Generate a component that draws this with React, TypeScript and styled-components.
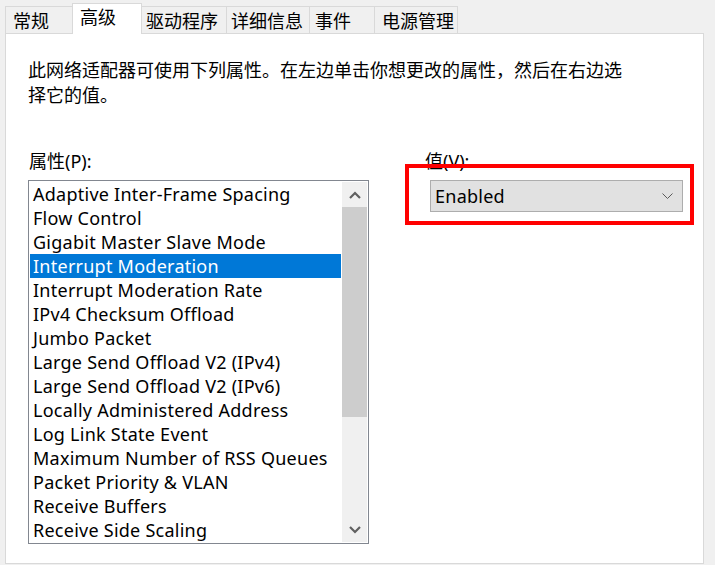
import React from "react";
import styled, { createGlobalStyle } from "styled-components";

const Global = createGlobalStyle`
  html, body { margin: 0; padding: 0; background: #f0f0f0; }
  body { font-family: "Noto Sans", "Noto Sans CJK SC", sans-serif; color: #000; }
`;

const Window = styled.div`
  position: relative;
  width: 715px;
  height: 565px;
  background: #f0f0f0;
  overflow: hidden;
`;

const TabBar = styled.div`
  display: flex;
  align-items: flex-end;
  height: 33px;
  padding-left: 5px;
  position: relative;
  z-index: 1;
`;

const Tab = styled.div<{ $w: number; $pl: number; $active?: boolean }>`
  box-sizing: border-box;
  width: ${(p) => p.$w}px;
  height: ${(p) => (p.$active ? 31 : 27)}px;
  margin-left: -1px;
  margin-bottom: ${(p) => (p.$active ? -1 : 0)}px;
  padding-left: ${(p) => p.$pl}px;
  border: 1px solid #d9d9d9;
  border-bottom: none;
  background: ${(p) => (p.$active ? "#ffffff" : "#f0f0f0")};
  font-family: "Noto Sans CJK SC", sans-serif;
  font-size: 18px;
  line-height: ${(p) => (p.$active ? 25 : 26)}px;
  white-space: nowrap;
  position: relative;
  z-index: ${(p) => (p.$active ? 2 : 1)};
  &:first-child { margin-left: 0; }
`;

const Panel = styled.div`
  box-sizing: border-box;
  width: 699px;
  height: 531px;
  margin-left: 5px;
  border: 1px solid #d9d9d9;
  background: #ffffff;
  padding: 23px 0 0 22px;
`;

const Description = styled.p`
  margin: 0;
  width: 610px;
  font-family: "Noto Sans CJK SC", sans-serif;
  font-size: 18px;
  line-height: 25px;
`;

const Columns = styled.div`
  display: flex;
  gap: 55px;
  margin-top: 42px;
`;

const Column = styled.div<{ $w: number }>`
  display: flex;
  flex-direction: column;
  width: ${(p) => p.$w}px;
`;

const Label = styled.div`
  font-family: "Noto Sans", "Noto Sans CJK SC", sans-serif;
  font-size: 18px;
  line-height: 24px;
  height: 24px;
  margin-bottom: 7px;
  padding-left: 1px;
`;

const ListBox = styled.div`
  box-sizing: border-box;
  width: 341px;
  height: 364px;
  border: 1px solid #828790;
  padding: 1px;
  display: flex;
  gap: 1px;
  background: #fff;
`;

const Items = styled.div`
  flex: 1;
  display: flex;
  flex-direction: column;
`;

const Item = styled.div<{ $selected?: boolean }>`
  height: 24px;
  line-height: 24px;
  padding-left: 3px;
  font-size: 18px;
  letter-spacing: 0.25px;
  white-space: nowrap;
  background: ${(p) => (p.$selected ? "#0078d7" : "transparent")};
  color: ${(p) => (p.$selected ? "#ffffff" : "#000000")};
`;

const ScrollBar = styled.div`
  width: 25px;
  display: flex;
  flex-direction: column;
  background: #f0f0f0;
`;

const ScrollButton = styled.div`
  height: 25px;
  display: flex;
  align-items: center;
  justify-content: center;
  flex: none;
`;

const Thumb = styled.div`
  height: 210px;
  background: #cdcdcd;
  flex: none;
`;

const Track = styled.div`
  flex: 1;
`;

const Combo = styled.div`
  box-sizing: border-box;
  width: 253px;
  height: 32px;
  margin-left: 6px;
  border: 1px solid #adadad;
  background: #e1e1e1;
  display: flex;
  align-items: center;
  justify-content: space-between;
  padding: 0 9px 0 4px;
  font-size: 18px;
  letter-spacing: 0.25px;
`;

const Highlight = styled.div`
  position: absolute;
  left: 405px;
  top: 164px;
  width: 289px;
  height: 61px;
  box-sizing: border-box;
  border: 4px solid #ff0000;
  pointer-events: none;
`;

const tabs = [
  { label: "常规", w: 68, pl: 7 },
  { label: "高级", w: 70, pl: 7, active: true },
  { label: "驱动程序", w: 86, pl: 4 },
  { label: "详细信息", w: 84, pl: 4 },
  { label: "事件", w: 66, pl: 5 },
  { label: "电源管理", w: 84, pl: 7 },
];

const items = [
  "Adaptive Inter-Frame Spacing",
  "Flow Control",
  "Gigabit Master Slave Mode",
  "Interrupt Moderation",
  "Interrupt Moderation Rate",
  "IPv4 Checksum Offload",
  "Jumbo Packet",
  "Large Send Offload V2 (IPv4)",
  "Large Send Offload V2 (IPv6)",
  "Locally Administered Address",
  "Log Link State Event",
  "Maximum Number of RSS Queues",
  "Packet Priority & VLAN",
  "Receive Buffers",
  "Receive Side Scaling",
];

const Chevron = ({ up }: { up?: boolean }) => (
  <svg width="12" height="8" viewBox="0 0 12 8">
    <path
      d={up ? "M1 7 L6 2 L11 7" : "M1 1 L6 6 L11 1"}
      fill="none"
      stroke="#606060"
      strokeWidth="2.2"
    />
  </svg>
);

const ComboArrow = () => (
  <svg width="11" height="6" viewBox="0 0 11 6">
    <path d="M0.5 0.5 L5.5 5.5 L10.5 0.5" fill="none" stroke="#5a5a5a" strokeWidth="1" />
  </svg>
);

export default function App() {
  return (
    <Window>
      <Global />
      <TabBar>
        {tabs.map((t) => (
          <Tab key={t.label} $w={t.w} $pl={t.pl} $active={t.active}>
            {t.label}
          </Tab>
        ))}
      </TabBar>
      <Panel>
        <Description>
          此网络适配器可使用下列属性。在左边单击你想更改的属性，然后在右边选择它的值。
        </Description>
        <Columns>
          <Column $w={341}>
            <Label>属性(P):</Label>
            <ListBox>
              <Items>
                {items.map((it, i) => (
                  <Item key={it} $selected={i === 3}>
                    {it}
                  </Item>
                ))}
              </Items>
              <ScrollBar>
                <ScrollButton>
                  <Chevron up />
                </ScrollButton>
                <Thumb />
                <Track />
                <ScrollButton>
                  <Chevron />
                </ScrollButton>
              </ScrollBar>
            </ListBox>
          </Column>
          <Column $w={260}>
            <Label>值(V):</Label>
            <Combo>
              <span>Enabled</span>
              <ComboArrow />
            </Combo>
          </Column>
        </Columns>
      </Panel>
      <Highlight />
    </Window>
  );
}
